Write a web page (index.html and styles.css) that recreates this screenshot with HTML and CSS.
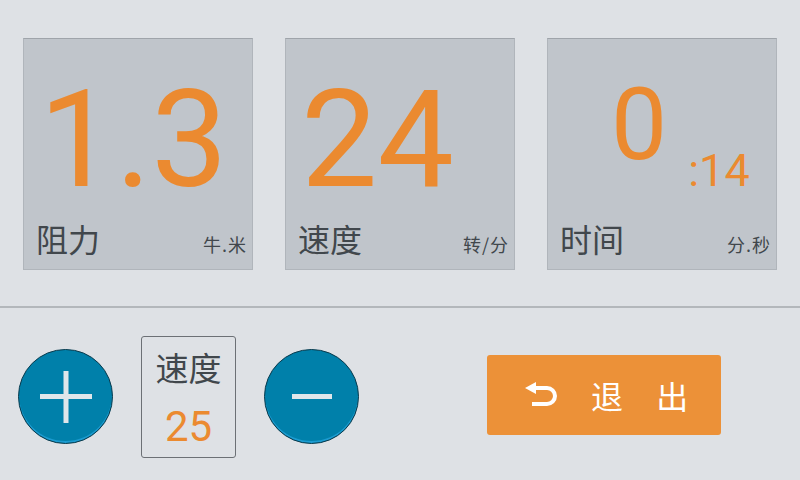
FILE: index.html
```html
<!DOCTYPE html>
<html lang="zh">
<head>
    <meta charset="UTF-8">
    <meta name="viewport" content="width=device-width, initial-scale=1.0">
    <title>运动面板</title>
    <link rel="stylesheet" href="styles.css">
</head>
<body>
    <section class="cards">
        <div class="card">
            <div class="value">1.3</div>
            <div class="card-foot">
                <span class="label">阻力</span>
                <span class="unit">牛.米</span>
            </div>
        </div>
        <div class="card">
            <div class="value">24</div>
            <div class="card-foot">
                <span class="label">速度</span>
                <span class="unit">转/分</span>
            </div>
        </div>
        <div class="card">
            <div class="time">
                <span class="minutes">0</span>
                <span class="seconds">:14</span>
            </div>
            <div class="card-foot">
                <span class="label">时间</span>
                <span class="unit">分.秒</span>
            </div>
        </div>
    </section>

    <section class="controls">
        <button class="round-btn" aria-label="加">
            <svg width="56" height="56" viewBox="0 0 56 56">
                <rect x="2" y="25" width="52" height="5" fill="#dfe6ea"/>
                <rect x="25.5" y="2" width="5" height="52" fill="#dfe6ea"/>
            </svg>
        </button>
        <div class="speed-box">
            <span class="speed-label">速度</span>
            <span class="speed-value">25</span>
        </div>
        <button class="round-btn" aria-label="减">
            <svg width="56" height="56" viewBox="0 0 56 56">
                <rect x="8" y="25" width="40" height="5" fill="#dfe6ea"/>
            </svg>
        </button>
        <button class="exit-btn">
            <svg width="32" height="26" viewBox="0 0 32 26">
                <path d="M9 6 H22 a8 8 0 0 1 0 16 H7" fill="none" stroke="#fff" stroke-width="4"/>
                <path d="M0 6 L11 0 L11 12 Z" fill="#fff"/>
            </svg>
            <span class="exit-text">退 出</span>
        </button>
    </section>
</body>
</html>
```

FILE: styles.css
```css
body {
    margin: 0;
    padding: 0;
    width: 800px;
    height: 480px;
    background-color: #dee1e5;
    font-family: "Noto Sans CJK SC", Roboto, sans-serif;
    overflow: hidden;
}

.cards {
    display: flex;
    gap: 32px;
    padding: 38px 0 0 23px;
    height: 308px;
    box-sizing: border-box;
    border-bottom: 2px solid #b3b7bb;
}

.card {
    width: 230px;
    height: 232px;
    box-sizing: border-box;
    background: #c0c5cb;
    border: 1px solid #b0b5bb;
    border-top-color: #9fa4aa;
    display: flex;
    flex-direction: column;
}

.value {
    font-family: Roboto, sans-serif;
    font-size: 136px;
    line-height: 1;
    color: #eb8a30;
    padding: 33px 0 0 15px;
}

.time {
    font-family: Roboto, sans-serif;
    color: #eb8a30;
    display: flex;
    align-items: flex-start;
    padding-left: 63px;
}

.minutes {
    font-size: 100px;
    line-height: 1;
    padding-top: 36px;
}

.seconds {
    font-size: 45px;
    line-height: 1;
    padding: 109px 0 0 21px;
}

.card-foot {
    margin-top: auto;
    display: flex;
    justify-content: space-between;
    align-items: baseline;
    padding: 0 5px 15px 12px;
}

.label {
    font-size: 32px;
    line-height: 1;
    color: #41474c;
}

.unit {
    font-size: 18px;
    line-height: 1;
    color: #41474c;
    letter-spacing: 1px;
}

.controls {
    display: flex;
    align-items: flex-start;
    padding: 28px 0 0 18px;
}

.round-btn {
    width: 95px;
    height: 95px;
    border-radius: 50%;
    background: #0080aa;
    border: 1px solid #0a3a4c;
    box-shadow: inset 0 -2px 0 #1b9bd0;
    display: flex;
    align-items: center;
    justify-content: center;
    padding: 0;
    margin-top: 13px;
}

.speed-box {
    width: 95px;
    height: 122px;
    box-sizing: border-box;
    margin: 0 28px;
    border: 1px solid #6c7075;
    border-radius: 3px;
    display: flex;
    flex-direction: column;
    align-items: center;
}

.speed-label {
    font-size: 33px;
    line-height: 1;
    color: #41474c;
    padding-top: 14px;
}

.speed-value {
    font-family: Roboto, sans-serif;
    font-size: 42px;
    line-height: 1;
    color: #eb8a30;
    padding-top: 22px;
}

.exit-btn {
    margin: 19px 0 0 128px;
    width: 234px;
    height: 80px;
    background: #ec9138;
    border: none;
    border-radius: 3px;
    display: flex;
    align-items: center;
    padding: 0 0 0 38px;
    gap: 34px;
    font-family: "Noto Sans CJK SC", sans-serif;
}

.exit-text {
    font-size: 32px;
    line-height: 1;
    color: #fff;
    letter-spacing: 13px;
}
```
